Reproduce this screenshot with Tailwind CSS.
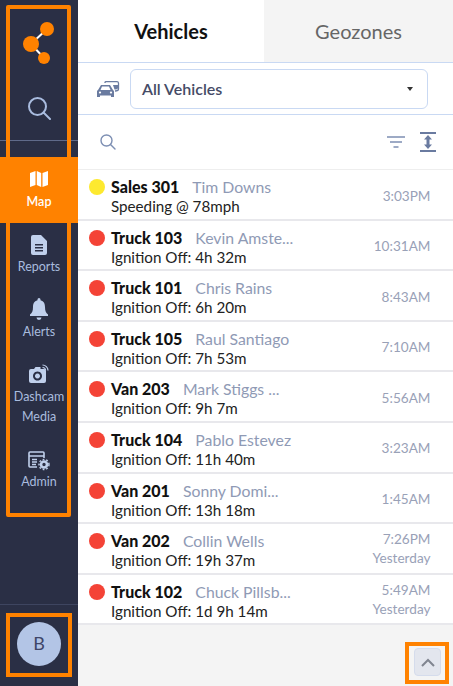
<!DOCTYPE html>
<html lang="en">
<head>
<meta charset="UTF-8">
<title>Vehicles</title>
<script src="https://cdn.jsdelivr.net/npm/@tailwindcss/browser@4"></script>
</head>
<body class="overflow-hidden bg-[#f4f4f4]">
<div class="relative flex h-[686px] w-[453px] font-['Lato',sans-serif]">

  <!-- sidebar -->
  <aside class="flex h-full w-[78px] shrink-0 flex-col bg-[#2a2f45]">
    <div class="flex h-[141px] flex-col items-center border-b border-[#5f6a8a]">
      <svg class="mt-[22px] h-[44px] w-[34px]" viewBox="0 0 34 44">
        <path d="M9 22 L25 7 M9 22 L22 36" stroke="#fff" stroke-width="2"/>
        <circle cx="9" cy="22" r="8" fill="#ff8200"/>
        <circle cx="25" cy="7" r="7" fill="#ff8200"/>
        <circle cx="22" cy="36" r="6" fill="#ff8200"/>
      </svg>
      <svg class="mt-[31px] h-[23px] w-[23px]" viewBox="0 0 23 23" fill="none" stroke="#a9bcdf" stroke-width="2">
        <circle cx="9.5" cy="9.5" r="8.5"/>
        <path d="M15.5 15.5 L22 22" stroke-linecap="round"/>
      </svg>
    </div>
    <nav class="mt-[16px] flex flex-col text-center text-[12.5px] leading-[19px] text-[#a9bcdf]">
      <a class="flex h-[66px] flex-col items-center bg-[#ff8200] pt-[12px] font-semibold text-white">
        <svg class="h-[20px] w-[20px]" viewBox="0 0 20 20" fill="#fff">
          <path d="M1 4 L6.5 2 V16 L1 18 Z M7.8 2 L12.2 4 V18 L7.8 16 Z M13.5 4 L19 2 V16 L13.5 18 Z"/>
        </svg>
        <span class="mt-[3px]">Map</span>
      </a>
      <a class="mt-[12px] flex flex-col items-center">
        <svg class="h-[20px] w-[16px]" viewBox="0 0 16 20" fill="#c0d0ec">
          <path fill-rule="evenodd" d="M2 0 H10 L16 6 V18 a2 2 0 0 1 -2 2 H2 a2 2 0 0 1 -2 -2 V2 a2 2 0 0 1 2 -2 Z M4 9 V10.5 H12 V9 Z M4 12 V13.5 H12 V12 Z M4 15 V16.5 H12 V15 Z"/>
        </svg>
        <span class="mt-[2px]">Reports</span>
      </a>
      <a class="mt-[22px] flex flex-col items-center">
        <svg class="h-[22px] w-[18px]" viewBox="0 0 18 22" fill="#c0d0ec">
          <path d="M9 0 a1.5 1.5 0 0 1 1.5 1.5 V2.2 C14 3 15 6 15 9 C15 13 16 15 18 16.5 V18 H0 V16.5 C2 15 3 13 3 9 C3 6 4 3 7.5 2.2 V1.5 A1.5 1.5 0 0 1 9 0 Z M6.5 19.5 H11.5 A2.5 2.5 0 0 1 6.5 19.5 Z"/>
        </svg>
        <span class="mt-[2px]">Alerts</span>
      </a>
      <a class="mt-[23px] flex flex-col items-center">
        <svg class="h-[20px] w-[20px]" viewBox="0 0 20 20" fill="#c0d0ec">
          <path fill-rule="evenodd" d="M2 5 H5 L6.5 3 H11.5 V5 H15 a2 2 0 0 1 2 2 V17 a2 2 0 0 1 -2 2 H2 a2 2 0 0 1 -2 -2 V7 a2 2 0 0 1 2 -2 Z M8.5 7.5 a4.5 4.5 0 1 0 0.01 0 Z M8.5 9.5 a2.5 2.5 0 1 1 -0.01 0 Z"/>
          <path d="M13.5 1 a5.5 5.5 0 0 1 5.5 5.5 M13.5 3.5 a3 3 0 0 1 3 3" fill="none" stroke="#c0d0ec" stroke-width="1.2"/>
        </svg>
        <span class="mt-[3px] leading-[20px]">Dashcam<br>Media</span>
      </a>
      <a class="mt-[24px] flex flex-col items-center">
        <svg class="h-[20px] w-[22px]" viewBox="0 0 22 20" fill="none" stroke="#c0d0ec" stroke-width="1.6">
          <path d="M9 16 H2 a1 1 0 0 1 -1 -1 V2 a1 1 0 0 1 1 -1 H15 a1 1 0 0 1 1 1 V7"/>
          <path d="M1 5 H16 M4 8.5 H9 M4 11 H9 M4 13.5 H8"/>
          <circle cx="16" cy="13.5" r="3" stroke-width="2.6"/>
          <circle cx="16" cy="13.5" r="5" stroke-width="1.4" stroke-dasharray="1.8 1.8"/>
        </svg>
        <span class="mt-[1px]">Admin</span>
      </a>
    </nav>
    <div class="mt-auto flex h-[82px] items-center justify-center border-t border-[#3e4560] pb-[4px]">
      <div class="flex h-[44px] w-[44px] items-center justify-center rounded-full bg-[#b3c5e6] text-[18px] text-[#3f4668]">B</div>
    </div>
  </aside>

  <!-- main panel -->
  <main class="flex h-full min-w-0 flex-1 flex-col">
    <div class="flex h-[63px] border-b border-[#c9d9f3] bg-white text-[20px]">
      <div class="flex w-[186px] items-center justify-center font-bold text-[#111]">Vehicles</div>
      <div class="flex flex-1 items-center justify-center bg-[#f4f4f4] text-[#666]">Geozones</div>
    </div>
    <div class="flex h-[52px] items-center border-b border-[#c9d9f3] bg-white pl-[19px]">
      <svg class="h-[16px] w-[23px]" viewBox="0 0 23 16">
        <path d="M8 2 V1.5 A1 1 0 0 1 9 0.7 H20 A1.5 1.5 0 0 1 21.5 2 V8 C21.5 9.5 20 10 18 10" fill="none" stroke="#6a7ba0" stroke-width="1.3"/>
        <path d="M16 4 H21 V7 C21 8 19 8.500 17.500 8.500 Z" fill="#6a7ba0"/>
        <path fill="#6a7ba0" fill-rule="evenodd" d="M4 4 H13 L16 9 A2 2 0 0 1 17 11 V16 H14 V14.500 H3 V16 H0 V11 A2 2 0 0 1 1 9 Z M5 5.500 L3.500 9 H13.500 L12 5.500 Z M3 10.500 A1 1 0 1 0 3.010 10.500 Z M14 10.500 A1 1 0 1 0 14.010 10.500 Z"/>
      </svg>
      <div class="ml-[10px] flex h-[40px] w-[298px] items-center justify-between rounded-[6px] border border-[#c9d9f3] pl-[11px] pr-[14px] text-[16px] font-semibold text-[#454b66]">
        <span>All Vehicles</span>
        <span class="h-0 w-0 border-x-[3.5px] border-t-[4px] border-x-transparent border-t-[#333]"></span>
      </div>
    </div>
    <div class="flex h-[55px] items-center justify-between border-b border-[#eeeeee] bg-white pl-[22px] pr-[17px]">
      <svg class="h-[16px] w-[16px]" viewBox="0 0 16 16" fill="none" stroke="#7d8fb3" stroke-width="1.4">
        <circle cx="6.500" cy="6.500" r="5.500"/>
        <path d="M10.500 10.500 L15 15" stroke-linecap="round"/>
      </svg>
      <div class="flex items-center gap-[15px]">
        <svg class="h-[12px] w-[18px]" viewBox="0 0 18 12" stroke="#7d8fb3" stroke-width="1.7">
          <path d="M0 1 H18 M3 6 H15 M6.500 11 H11.500"/>
        </svg>
        <svg class="h-[20px] w-[16px]" viewBox="0 0 16 20" fill="#6a7ba0">
          <rect x="0" y="0" width="16" height="2"/>
          <rect x="0" y="18" width="16" height="2"/>
          <path d="M8 3 L12 7.500 H9.500 V12.500 H12 L8 17 L4 12.500 H6.500 V7.500 H4 Z"/>
        </svg>
      </div>
    </div>

    <ul class="bg-white">
      <li class="flex h-[50.6px] border-b-2 border-[#e8e8ec] pl-[11px] pr-[22.5px]">
        <span class="mt-[9px] h-[16px] w-[16px] shrink-0 rounded-full bg-[#fde92f]"></span>
        <div class="ml-[6px] min-w-0 flex-1 pt-[7px]">
          <div class="flex items-baseline whitespace-nowrap leading-[20px]"><b class="text-[16px] font-black text-[#111]">Sales 301</b><span class="ml-[13px] text-[15.8px] text-[#8f9ab5]">Tim Downs</span></div>
          <div class="text-[15.2px] leading-[19px] text-[#222]">Speeding @ 78mph</div>
        </div>
        <div class="pt-[16.5px] text-right text-[13.6px] leading-[19px] text-[#99a1b7]">3:03PM</div>
      </li>
      <li class="flex h-[50.6px] border-b-2 border-[#e8e8ec] pl-[11px] pr-[22.5px]">
        <span class="mt-[9px] h-[16px] w-[16px] shrink-0 rounded-full bg-[#f44336]"></span>
        <div class="ml-[6px] min-w-0 flex-1 pt-[7px]">
          <div class="flex items-baseline whitespace-nowrap leading-[20px]"><b class="text-[16px] font-black text-[#111]">Truck 103</b><span class="ml-[13px] text-[15.8px] text-[#8f9ab5]">Kevin Amste...</span></div>
          <div class="text-[15.2px] leading-[19px] text-[#222]">Ignition Off: 4h 32m</div>
        </div>
        <div class="pt-[16.5px] text-right text-[13.6px] leading-[19px] text-[#99a1b7]">10:31AM</div>
      </li>
      <li class="flex h-[50.6px] border-b-2 border-[#e8e8ec] pl-[11px] pr-[22.5px]">
        <span class="mt-[9px] h-[16px] w-[16px] shrink-0 rounded-full bg-[#f44336]"></span>
        <div class="ml-[6px] min-w-0 flex-1 pt-[7px]">
          <div class="flex items-baseline whitespace-nowrap leading-[20px]"><b class="text-[16px] font-black text-[#111]">Truck 101</b><span class="ml-[13px] text-[15.8px] text-[#8f9ab5]">Chris Rains</span></div>
          <div class="text-[15.2px] leading-[19px] text-[#222]">Ignition Off: 6h 20m</div>
        </div>
        <div class="pt-[16.5px] text-right text-[13.6px] leading-[19px] text-[#99a1b7]">8:43AM</div>
      </li>
      <li class="flex h-[50.6px] border-b-2 border-[#e8e8ec] pl-[11px] pr-[22.5px]">
        <span class="mt-[9px] h-[16px] w-[16px] shrink-0 rounded-full bg-[#f44336]"></span>
        <div class="ml-[6px] min-w-0 flex-1 pt-[7px]">
          <div class="flex items-baseline whitespace-nowrap leading-[20px]"><b class="text-[16px] font-black text-[#111]">Truck 105</b><span class="ml-[13px] text-[15.8px] text-[#8f9ab5]">Raul Santiago</span></div>
          <div class="text-[15.2px] leading-[19px] text-[#222]">Ignition Off: 7h 53m</div>
        </div>
        <div class="pt-[16.5px] text-right text-[13.6px] leading-[19px] text-[#99a1b7]">7:10AM</div>
      </li>
      <li class="flex h-[50.6px] border-b-2 border-[#e8e8ec] pl-[11px] pr-[22.5px]">
        <span class="mt-[9px] h-[16px] w-[16px] shrink-0 rounded-full bg-[#f44336]"></span>
        <div class="ml-[6px] min-w-0 flex-1 pt-[7px]">
          <div class="flex items-baseline whitespace-nowrap leading-[20px]"><b class="text-[16px] font-black text-[#111]">Van 203</b><span class="ml-[13px] text-[15.8px] text-[#8f9ab5]">Mark Stiggs ...</span></div>
          <div class="text-[15.2px] leading-[19px] text-[#222]">Ignition Off: 9h 7m</div>
        </div>
        <div class="pt-[16.5px] text-right text-[13.6px] leading-[19px] text-[#99a1b7]">5:56AM</div>
      </li>
      <li class="flex h-[50.6px] border-b-2 border-[#e8e8ec] pl-[11px] pr-[22.5px]">
        <span class="mt-[9px] h-[16px] w-[16px] shrink-0 rounded-full bg-[#f44336]"></span>
        <div class="ml-[6px] min-w-0 flex-1 pt-[7px]">
          <div class="flex items-baseline whitespace-nowrap leading-[20px]"><b class="text-[16px] font-black text-[#111]">Truck 104</b><span class="ml-[13px] text-[15.8px] text-[#8f9ab5]">Pablo Estevez</span></div>
          <div class="text-[15.2px] leading-[19px] text-[#222]">Ignition Off: 11h 40m</div>
        </div>
        <div class="pt-[16.5px] text-right text-[13.6px] leading-[19px] text-[#99a1b7]">3:23AM</div>
      </li>
      <li class="flex h-[50.6px] border-b-2 border-[#e8e8ec] pl-[11px] pr-[22.5px]">
        <span class="mt-[9px] h-[16px] w-[16px] shrink-0 rounded-full bg-[#f44336]"></span>
        <div class="ml-[6px] min-w-0 flex-1 pt-[7px]">
          <div class="flex items-baseline whitespace-nowrap leading-[20px]"><b class="text-[16px] font-black text-[#111]">Van 201</b><span class="ml-[13px] text-[15.8px] text-[#8f9ab5]">Sonny Domi...</span></div>
          <div class="text-[15.2px] leading-[19px] text-[#222]">Ignition Off: 13h 18m</div>
        </div>
        <div class="pt-[16.5px] text-right text-[13.6px] leading-[19px] text-[#99a1b7]">1:45AM</div>
      </li>
      <li class="flex h-[50.6px] border-b-2 border-[#e8e8ec] pl-[11px] pr-[22.5px]">
        <span class="mt-[9px] h-[16px] w-[16px] shrink-0 rounded-full bg-[#f44336]"></span>
        <div class="ml-[6px] min-w-0 flex-1 pt-[7px]">
          <div class="flex items-baseline whitespace-nowrap leading-[20px]"><b class="text-[16px] font-black text-[#111]">Van 202</b><span class="ml-[13px] text-[15.8px] text-[#8f9ab5]">Collin Wells</span></div>
          <div class="text-[15.2px] leading-[19px] text-[#222]">Ignition Off: 19h 37m</div>
        </div>
        <div class="pt-[6px] text-right text-[13.6px] leading-[19px] text-[#99a1b7]">7:26PM<br>Yesterday</div>
      </li>
      <li class="flex h-[50.6px] border-b-2 border-[#e8e8ec] pl-[11px] pr-[22.5px]">
        <span class="mt-[9px] h-[16px] w-[16px] shrink-0 rounded-full bg-[#f44336]"></span>
        <div class="ml-[6px] min-w-0 flex-1 pt-[7px]">
          <div class="flex items-baseline whitespace-nowrap leading-[20px]"><b class="text-[16px] font-black text-[#111]">Truck 102</b><span class="ml-[13px] text-[15.8px] text-[#8f9ab5]">Chuck Pillsb...</span></div>
          <div class="text-[15.2px] leading-[19px] text-[#222]">Ignition Off: 1d 9h 14m</div>
        </div>
        <div class="pt-[6px] text-right text-[13.6px] leading-[19px] text-[#99a1b7]">5:49AM<br>Yesterday</div>
      </li>
    </ul>

    <div class="flex flex-1 justify-end pr-[12px] pt-[23px]">
      <button class="flex h-[28px] w-[27px] items-center justify-center rounded-[4px] border border-[#d5dcec] bg-[#e3e6ee]">
        <svg class="h-[9px] w-[14px]" viewBox="0 0 14 9" fill="none" stroke="#808590" stroke-width="2">
          <path d="M1 8 L7 2 L13 8"/>
        </svg>
      </button>
    </div>
  </main>

  <!-- orange annotation boxes laid over the screenshot -->
  <div class="absolute left-[6px] top-[5px] h-[512px] w-[65px] rounded-[2px] border-[4px] border-[#ff8200]"></div>
  <div class="absolute left-[6px] top-[613px] h-[64px] w-[66px] border-[4px] border-[#ff8200]"></div>
  <div class="absolute left-[405px] top-[642px] h-[42px] w-[44px] border-[4px] border-[#ff8200]"></div>
</div>
</body>
</html>
